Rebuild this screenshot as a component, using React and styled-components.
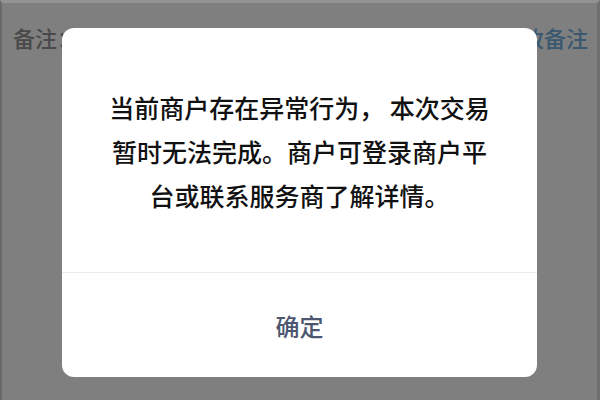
import React from 'react';
import styled, { createGlobalStyle } from 'styled-components';

const GlobalStyle = createGlobalStyle`
  html, body {
    margin: 0;
    padding: 0;
    width: 600px;
    height: 400px;
    overflow: hidden;
    font-family: "Noto Sans CJK SC", "Noto Sans", sans-serif;
  }
`;

const Screen = styled.div`
  position: relative;
  width: 600px;
  height: 400px;
  background: #ffffff;
  overflow: hidden;
`;

const RemarkBar = styled.div`
  display: flex;
  justify-content: space-between;
  align-items: center;
  padding: 22px 12px 0 13px;
  font-size: 22px;
  line-height: 30px;
  font-weight: 500;
`;

const RemarkLabel = styled.span`
  color: #929292;
`;

const RemarkAction = styled.span`
  color: #74b0de;
`;

const Backdrop = styled.div`
  position: absolute;
  inset: 0;
  background: rgba(0, 0, 0, 0.5);
  border-top: 3px solid #939393;
  border-left: 2px solid #6a6a6a;
  border-right: 3px solid #6f6f6f;
  display: flex;
  justify-content: center;
  align-items: flex-start;
  padding-top: 25px;
  box-sizing: border-box;
`;

const Dialog = styled.div`
  width: 475px;
  height: 349px;
  background: #ffffff;
  border-radius: 12px;
  display: flex;
  flex-direction: column;
  overflow: hidden;
`;

const Message = styled.p`
  margin: 0;
  padding: 57px 0 0;
  height: 245px;
  box-sizing: border-box;
  text-align: center;
  font-size: 25px;
  font-weight: 500;
  line-height: 44px;
  color: #111111;
  border-bottom: 1px solid #ebebeb;
`;

const ConfirmButton = styled.button`
  flex: 1;
  border: none;
  background: transparent;
  font-family: inherit;
  font-size: 24px;
  font-weight: 500;
  color: #4c5670;
  padding: 0;
  cursor: pointer;
`;

export default function App() {
  return (
    <>
      <GlobalStyle />
      <Screen>
        <RemarkBar>
          <RemarkLabel>备注：添加备注信息，方便核对</RemarkLabel>
          <RemarkAction>修改备注</RemarkAction>
        </RemarkBar>
        <Backdrop>
          <Dialog>
            <Message>
              当前商户存在异常行为， 本次交易
              <br />
              暂时无法完成。商户可登录商户平
              <br />
              台或联系服务商了解详情。
            </Message>
            <ConfirmButton>确定</ConfirmButton>
          </Dialog>
        </Backdrop>
      </Screen>
    </>
  );
}
